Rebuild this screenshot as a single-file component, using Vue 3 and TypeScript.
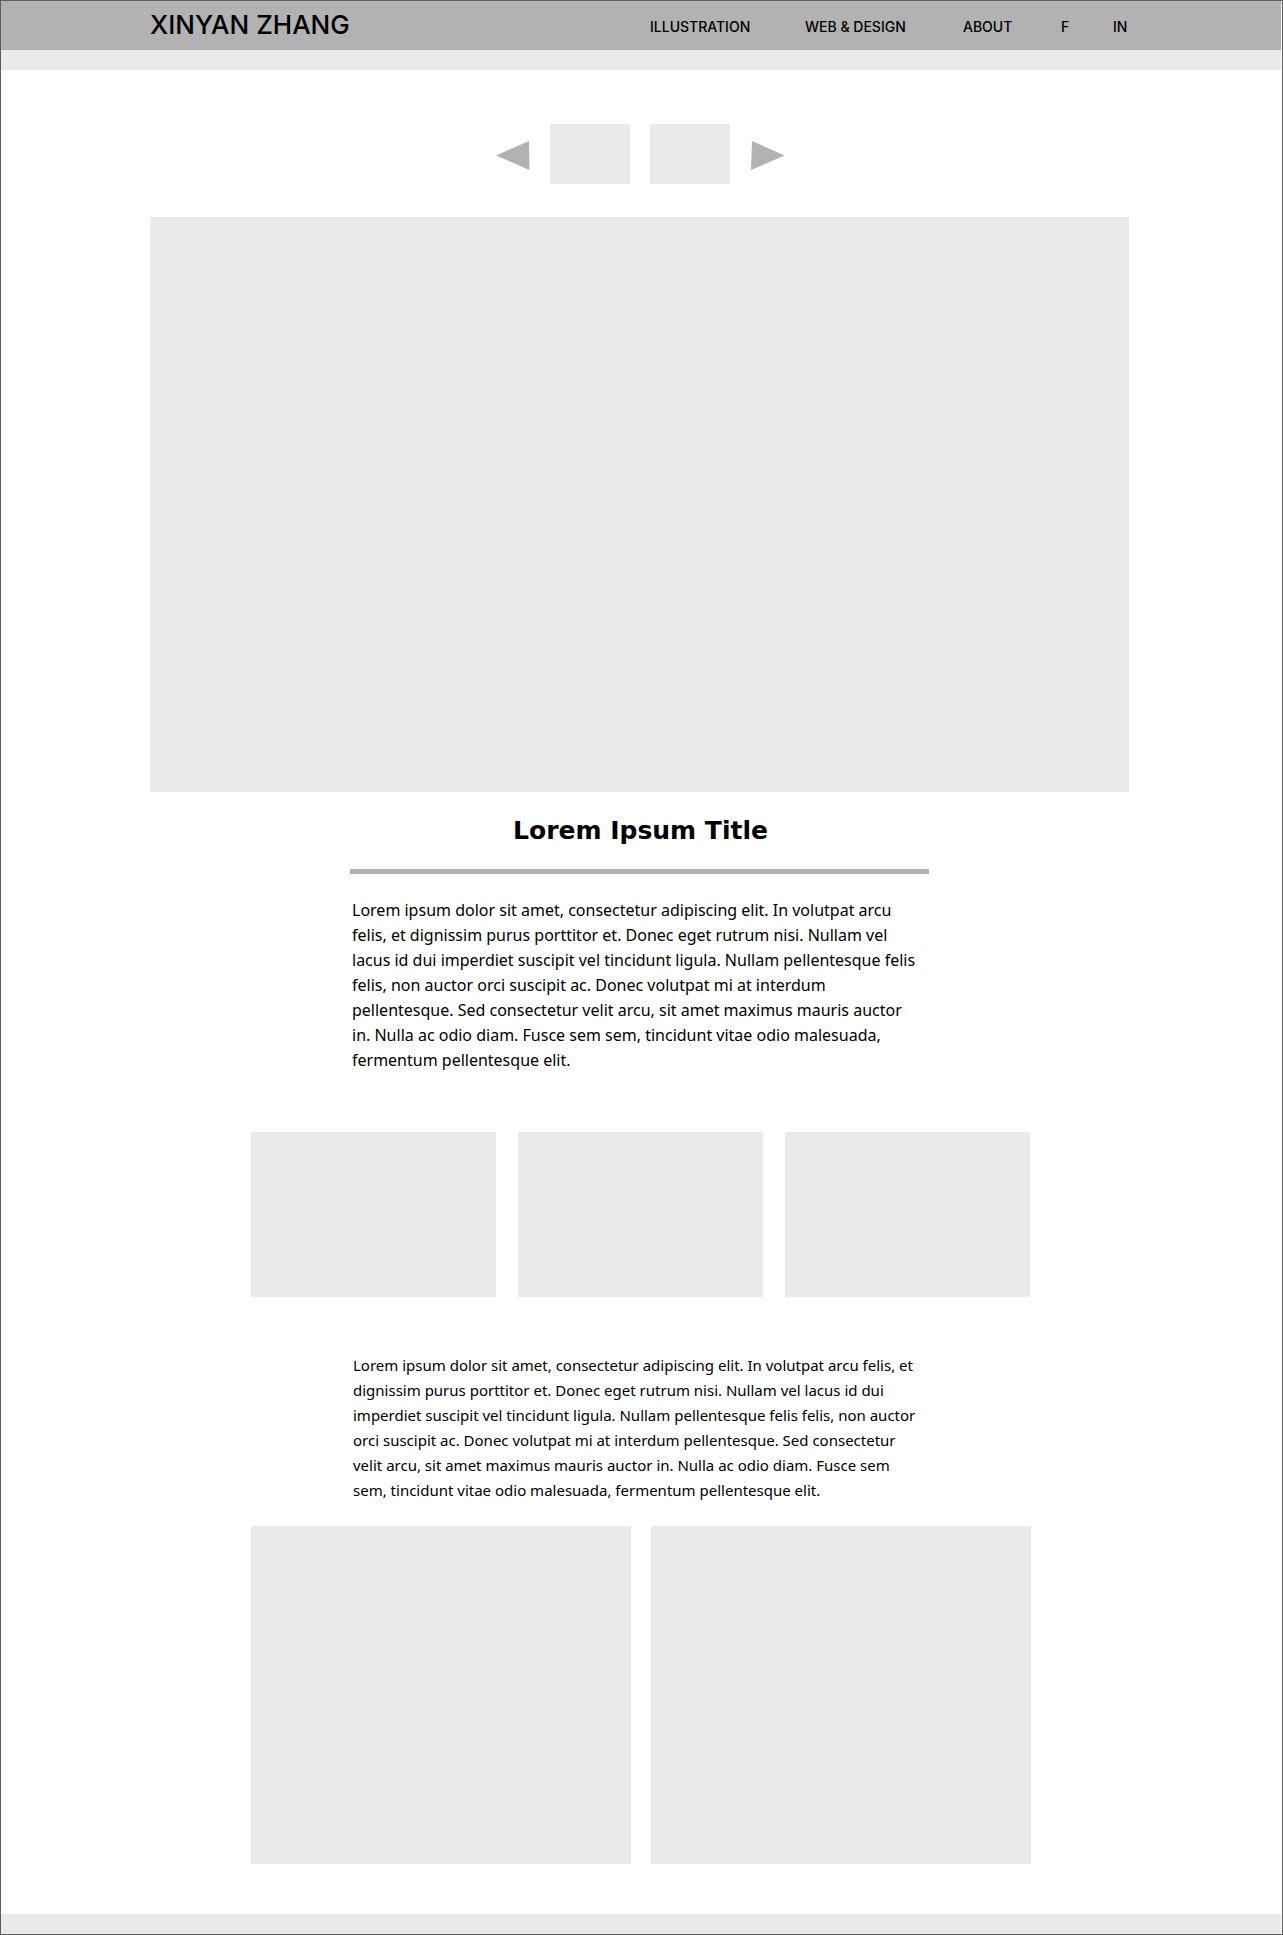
<script setup lang="ts">
interface NavItem {
  label: string
  href: string
}

const navItems: NavItem[] = [
  { label: 'ILLUSTRATION', href: '#illustration' },
  { label: 'WEB & DESIGN', href: '#web-design' },
  { label: 'ABOUT', href: '#about' },
  { label: 'F', href: '#facebook' },
  { label: 'IN', href: '#linkedin' },
]

const introLines: string[] = [
  'Lorem ipsum dolor sit amet, consectetur adipiscing elit. In volutpat arcu',
  'felis, et dignissim purus porttitor et. Donec eget rutrum nisi. Nullam vel',
  'lacus id dui imperdiet suscipit vel tincidunt ligula. Nullam pellentesque felis',
  'felis, non auctor orci suscipit ac. Donec volutpat mi at interdum',
  'pellentesque. Sed consectetur velit arcu, sit amet maximus mauris auctor',
  'in. Nulla ac odio diam. Fusce sem sem, tincidunt vitae odio malesuada,',
  'fermentum pellentesque elit.',
]

const detailLines: string[] = [
  'Lorem ipsum dolor sit amet, consectetur adipiscing elit. In volutpat arcu felis, et',
  'dignissim purus porttitor et. Donec eget rutrum nisi. Nullam vel lacus id dui',
  'imperdiet suscipit vel tincidunt ligula. Nullam pellentesque felis felis, non auctor',
  'orci suscipit ac. Donec volutpat mi at interdum pellentesque. Sed consectetur',
  'velit arcu, sit amet maximus mauris auctor in. Nulla ac odio diam. Fusce sem',
  'sem, tincidunt vitae odio malesuada, fermentum pellentesque elit.',
]
</script>

<template>
  <div class="page">
    <header class="header">
      <div class="header-inner">
        <a class="logo" href="#home">XINYAN ZHANG</a>
        <nav class="nav">
          <a v-for="item in navItems" :key="item.label" :href="item.href">{{ item.label }}</a>
        </nav>
      </div>
    </header>
    <div class="band"></div>

    <main class="main">
      <div class="carousel">
        <button class="arrow" type="button" aria-label="Previous">
          <svg width="35" height="32" viewBox="0 0 35 32"><path d="M1 17.5 34 3 34.5 32Z" /></svg>
        </button>
        <div class="box thumb"></div>
        <div class="box thumb"></div>
        <button class="arrow" type="button" aria-label="Next">
          <svg width="35" height="32" viewBox="0 0 35 32"><path d="M34.5 17.5 2 3 1 32Z" /></svg>
        </button>
      </div>

      <div class="box hero"></div>

      <article class="article">
        <h1 class="title">Lorem Ipsum Title</h1>
        <hr class="rule" />
        <p class="text intro">
          <span v-for="line in introLines" :key="line">{{ line }}</span>
        </p>
      </article>

      <div class="gallery triple">
        <div v-for="n in 3" :key="n" class="box"></div>
      </div>

      <p class="text detail">
        <span v-for="line in detailLines" :key="line">{{ line }}</span>
      </p>

      <div class="gallery pair">
        <div v-for="n in 2" :key="n" class="box"></div>
      </div>
    </main>

    <footer class="band"></footer>
  </div>
</template>

<style>
body {
  margin: 0;
  background: #fff;
}
</style>

<style scoped>
.page {
  box-sizing: border-box;
  border: 1px solid #5e5e5e;
  padding-right: 1px;
  background: #fff;
  color: #000;
  font-family: 'Noto Sans', 'Open Sans', sans-serif;
}

.header {
  background: #b2b2b2;
  padding-right: 3px;
}

.header-inner {
  display: flex;
  align-items: center;
  justify-content: space-between;
  max-width: 979px;
  height: 49px;
  margin: 0 auto;
  font-family: Inter, sans-serif;
  font-weight: 500;
}

.header a {
  color: inherit;
  text-decoration: none;
  white-space: nowrap;
}

.logo {
  font-size: 26px;
  line-height: 32px;
  padding-bottom: 2px;
}

.nav {
  display: grid;
  grid-template-columns: 155fr 158fr 98fr 52fr 16fr;
  width: 479px;
  padding-top: 3px;
  font-size: 14px;
  line-height: 20px;
}

.band {
  height: 20px;
  background: #eaeaea;
}

.box {
  background: #eaeaea;
}

.main {
  padding: 54px 3px 50px 0;
}

.carousel {
  display: flex;
  align-items: center;
  justify-content: center;
  gap: 20px;
}

.arrow {
  display: block;
  padding: 0;
  border: 0;
  background: none;
  cursor: pointer;
}

.arrow svg {
  display: block;
  fill: #b2b2b2;
}

.thumb {
  width: 80px;
  height: 60px;
}

.hero {
  max-width: 979px;
  aspect-ratio: 979 / 575;
  margin: 33px auto 0;
}

.article {
  max-width: 579px;
  margin: 0 auto;
}

.title {
  margin: 0;
  padding: 23px 0 22px 2px;
  font-family: 'DejaVu Sans', sans-serif;
  font-size: 25px;
  font-weight: 700;
  line-height: 32px;
  text-align: center;
  white-space: nowrap;
}

.rule {
  height: 5px;
  margin: 0;
  border: 0;
  background: #b2b2b2;
}

.text {
  margin: 0;
  line-height: 25px;
}

.text span {
  display: block;
  white-space: nowrap;
}

.intro {
  padding: 24px 0 0 2px;
  font-size: 16px;
}

.detail {
  box-sizing: border-box;
  max-width: 579px;
  margin: 56px auto 23px;
  padding-left: 3px;
  font-size: 15px;
}

.gallery {
  box-sizing: border-box;
  display: grid;
  max-width: 783px;
  margin: 0 auto;
  padding-left: 3px;
}

.triple {
  grid-template-columns: repeat(3, 1fr);
  gap: 22px;
  margin-top: 59px;
  padding-right: 1px;
}

.triple .box {
  aspect-ratio: 245 / 165;
}

.pair {
  grid-template-columns: repeat(2, 1fr);
  gap: 20px;
}

.pair .box {
  aspect-ratio: 380 / 338;
}
</style>
